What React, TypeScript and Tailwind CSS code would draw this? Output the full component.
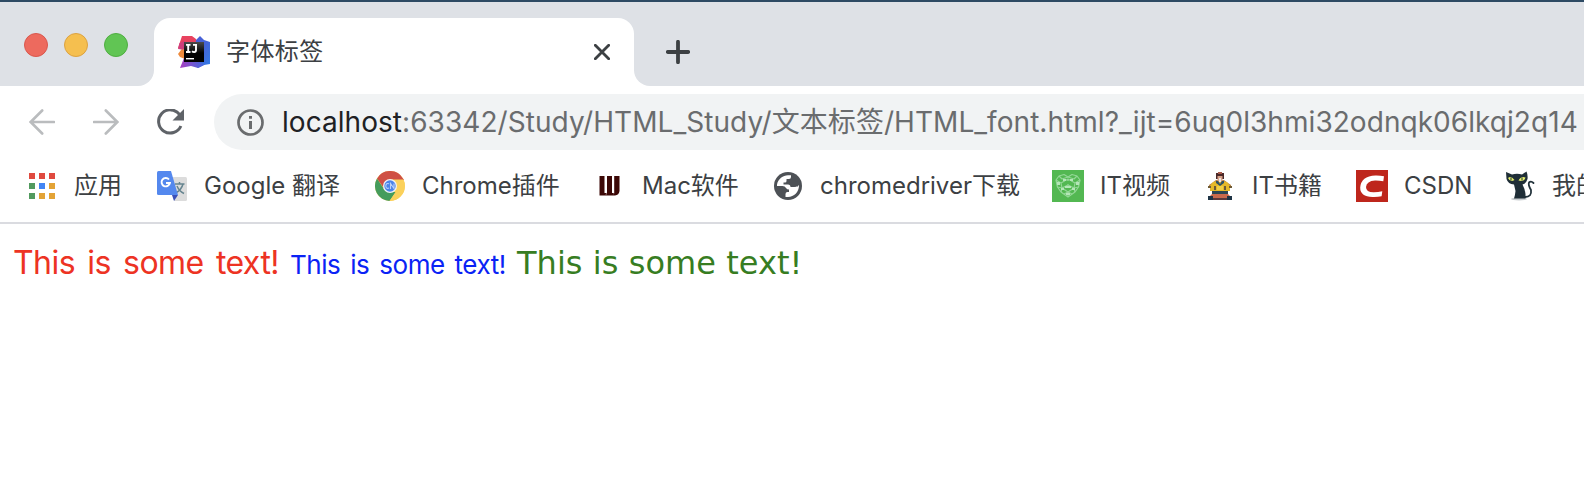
import type { ReactNode } from "react";

function IntelliJIcon() {
  return (
    <svg className="h-8 w-8 shrink-0" viewBox="0 0 32 32">
      <defs>
        <linearGradient id="ijBlue" x1="0" y1="0" x2="1" y2="1">
          <stop offset="0" stopColor="#4a5fd8" />
          <stop offset="0.5" stopColor="#4664d6" />
          <stop offset="1" stopColor="#2f7de8" />
        </linearGradient>
        <linearGradient id="ijPurple" x1="0" y1="0" x2="1" y2="0">
          <stop offset="0" stopColor="#a83fc0" />
          <stop offset="1" stopColor="#3f6ce0" />
        </linearGradient>
        <linearGradient id="ijBox" x1="0" y1="0" x2="0" y2="1">
          <stop offset="0" stopColor="#4a4a4a" />
          <stop offset="0.55" stopColor="#000" />
        </linearGradient>
      </defs>
      <path d="M4 0H14L18 3L19 8H6L5 14L0 12L2 6Z" fill="#e8425f" />
      <path d="M1.500 7L7 5V14L0 13Z" fill="#cf3f7c" />
      <path d="M3 14L7 13V23L2 21L0 18Z" fill="#ee8a3c" />
      <path d="M18 4L22 0L26 4L32 6V28L26 29L20 32L15 28Z" fill="url(#ijBlue)" />
      <path d="M6 22L18 25L27 28.500L20 32L13 30L2 32Z" fill="url(#ijPurple)" />
      <rect x="6" y="6" width="20" height="20" fill="url(#ijBox)" />
      <path d="M8 8.900H12.500M10.200 8.900V16M8 16H12.500M15 8.900H19M18 8.900V14Q18 16.100 16.200 16.100Q15 16.100 14 15.200" fill="none" stroke="#fff" strokeWidth="1.900" />
      <rect x="8" y="22" width="8" height="1.400" fill="#fff" />
    </svg>
  );
}

function AppsIcon() {
  return (
    <svg className="h-[26px] w-[26px] shrink-0" viewBox="0 0 26 26" shapeRendering="crispEdges">
      <path d="M0 0h6v6H0zM10 0h6v6h-6zM20 0h6v6h-6z" fill="#e04a3f" />
      <path d="M0 10h6v6H0zM0 20h6v6H0z" fill="#529a5f" />
      <path d="M10 10h6v6h-6z" fill="#4285f4" />
      <path d="M20 10h6v6h-6zM10 20h6v6h-6zM20 20h6v6h-6z" fill="#e3a336" />
    </svg>
  );
}

function TranslateIcon() {
  return (
    <svg className="h-[30px] w-[30px] shrink-0" viewBox="0 0 30 30">
      <path d="M14 6H28.500Q30 6 30 7.500V28.500Q30 30 28.500 30H17Z" fill="#dcdcdc" />
      <path d="M18 13H27.500M22.500 11V13M26 13Q24.500 19 18.500 22M20 15Q22 20 27 22.500" fill="none" stroke="#65848f" strokeWidth="1.500" />
      <path d="M15 24H21L17 30Z" fill="#3b50b8" />
      <path d="M1.500 0H14L21 24H1.500Q0 24 0 22.500V1.500Q0 0 1.500 0Z" fill="#5488ee" />
      <path d="M12 8.500A4.200 4.200 0 1 0 12.900 12H9" fill="none" stroke="#fff" strokeWidth="1.900" />
    </svg>
  );
}

function ChromeIcon() {
  return (
    <svg className="h-[30px] w-[30px] shrink-0" viewBox="0 0 30 30">
      <circle cx="15" cy="15" r="15" fill="#fbd15b" />
      <path d="M2 7.500A15 15 0 0 1 28 7.500L29 9H15L9.500 18Z" fill="#cf5044" />
      <path d="M2 7.500L9.300 18.500L15 21H21L14.500 30A15 15 0 0 1 2 7.500Z" fill="#459c5c" />
      <path d="M28 8.500H15V21H20.500L14.500 30A15 15 0 0 0 28.300 8.500Z" fill="#fbd15b" />
      <circle cx="15" cy="15" r="7" fill="#f1f3f5" />
      <circle cx="15" cy="15" r="5.700" fill="#4b84e8" />
      <path d="M14 12.800Q11 11.500 10.800 15Q11 18.300 14 17M15.500 18V12.500L19 17.500V12.500" fill="none" stroke="#b9d0f7" strokeWidth="1.100" />
    </svg>
  );
}

function MacIcon() {
  return (
    <svg className="h-5 w-[21px] shrink-0" viewBox="0 0 21 20">
      <path d="M0.500 0H5.500V17H8V0H13V17H15.200V0H20.500V15Q20 19 16 19.500H0.500Z" fill="#3c0806" />
      <path d="M6.200 18.500L8 16.500V18.500ZM13.700 18.500L15.200 16.500V18Z" fill="#9c7b79" />
    </svg>
  );
}

function GlobeIcon() {
  return (
    <svg className="h-7 w-7 shrink-0" viewBox="0 0 28 28">
      <circle cx="14" cy="14" r="14" fill="#4d5156" />
      <path d="M3 12.500C4 7 9 3.200 14 3.200H17V5Q17 7 15 7H12.500V9Q12.500 10.500 11 10.500H9.500V12.500H14Q16.500 12.500 16.500 15H20Q22 15 23 13.500L25 13.500C25 20 20 25 14 25H11.500V22Q11.500 20 13.500 20H15V17.500Q13 17.500 12 16Q11 14 8.500 14H3Z" fill="#fff" />
      <path d="M15.500 8.500L18 6.500L24 10.500V14.500H18L15.500 12Z" fill="#4d5156" />
    </svg>
  );
}

function VideoIcon() {
  return (
    <svg className="h-8 w-8 shrink-0" viewBox="0 0 32 32">
      <rect width="32" height="32" fill="#53b852" />
      <g fill="none" stroke="#93d796" strokeWidth="1.200" strokeLinejoin="round">
        <path d="M7 6L12 4.500L16 7L20 4.500L25 6L28 10L26.500 17L23 22L16 27L9 22L5.500 17L4 10Z" />
        <path d="M4 10L9 13L16 9L23 13L28 10M7 6L10 9L16 7L22 9L25 6M9 13L10 18L16 15L22 18L23 13M5.500 17L10 18L9 22M26.500 17L22 18L23 22M10 18L16 22L22 18M16 22V27M12 24L16 22L20 24M16 9V15" />
      </g>
      <path d="M11 9H14V11H11ZM18 9H21V11H18ZM5 12H8V15H5ZM24 12H27V15H24ZM13 16H19V18H13ZM9 18H12V20H9ZM20 18H23V20H20ZM14 23H18V25H14Z" fill="#b5e6b8" />
      <path d="M13 11H19V14H13Z" fill="#53b852" />
    </svg>
  );
}

function MonkIcon() {
  return (
    <svg className="h-7 w-6 shrink-0" viewBox="0 0 24 28">
      <path d="M4 11L8 8H16L20 11L23 13V15H1V13Z" fill="#b98445" />
      <path d="M8 1H16V7H8Z" fill="#4a2828" />
      <path d="M10 0H14V2H10Z" fill="#a85a4a" />
      <path d="M9.500 4H14.500V9H9.500Z" fill="#d9a38a" />
      <path d="M11 6H13V10H11Z" fill="#efe6e0" />
      <path d="M5 10L10 9L12 11L14 9L19 10L22 14V19H2V14Z" fill="#e6b928" />
      <path d="M8 9H10L12 12L14 9H16V11L12 14L8 11Z" fill="#2e5166" />
      <path d="M0 14H3V16H0ZM21 14H24V16H21ZM6 14H8V18H6ZM16 14H18V18H16Z" fill="#6d5a35" />
      <path d="M9 14H15V18H9Z" fill="#f2cf43" />
      <path d="M4 19H20V22H4Z" fill="#2d4654" />
      <path d="M4 22H20L22 24V26H2V24Z" fill="#c9694c" />
      <path d="M0 24H5V28H0ZM19 24H24V28H19Z" fill="#1e3345" />
      <path d="M5 26H19V28H5Z" fill="#5a3a3c" />
    </svg>
  );
}

function CsdnIcon() {
  return (
    <svg className="h-8 w-8 shrink-0" viewBox="0 0 32 32">
      <rect width="32" height="32" fill="#be261c" />
      <path d="M28 6.200L27.300 11.200Q23 10.400 19 10.500Q10.600 11 10 17Q10 22.500 18 22.300Q22 22.300 26.300 21.300L25.600 26.200Q21.500 27.200 16.500 27Q4 26.500 4.200 17.500Q5 6 19.500 5.400Q24 5.300 28 6.200Z" fill="#fff" />
    </svg>
  );
}

function CatIcon() {
  return (
    <svg className="h-[30px] w-[30px] shrink-0" viewBox="0 0 30 30">
      <ellipse cx="14" cy="28" rx="8" ry="1.500" fill="#c9cdd0" />
      <path d="M20 26Q27 26 26 19Q23 14 24 11.500Q26 9.500 28.500 12" fill="none" stroke="#22323b" strokeWidth="1.800" strokeLinecap="round" />
      <path d="M1 1L7 3.500Q12 2 17 3.500L21.500 0.500Q23 4 22.500 8Q21 13 17.500 13.500Q20 18 20.500 23V27.500H9Q10 25 10.500 20L9 13.500Q3 13 1.500 8Z" fill="#1f2e37" />
      <path d="M3 7Q6 4.500 9.500 9Q5 11.500 3 7ZM13.500 9.500Q16 4.500 20.500 6.500Q19.500 11 13.500 9.500Z" fill="#e4ee6c" />
      <path d="M6 6.500V9.500M17 6.500V9.500" stroke="#1f2e37" strokeWidth="1" />
    </svg>
  );
}

function Bookmark({ icon, children, className }: { icon: ReactNode; children: ReactNode; className: string }) {
  return (
    <div className={`flex shrink-0 items-center whitespace-nowrap ${className}`}>
      {icon}
      <span>{children}</span>
    </div>
  );
}

function TabStrip() {
  return (
    <div className="flex h-[86px] border-t-2 border-[#2d4a63] bg-[#dee1e6]">
      <div className="flex w-[154px] gap-4 rounded-br-2xl bg-[#dee1e6] pt-[31px] pl-6">
        <div className="h-6 w-6 rounded-full border border-[#d9574d] bg-[#ed6a5e]" />
        <div className="h-6 w-6 rounded-full border border-[#dca241] bg-[#f5bf4f]" />
        <div className="h-6 w-6 rounded-full border border-[#4fae41] bg-[#61c554]" />
      </div>
      <div className="flex flex-1 bg-linear-to-b from-[#dee1e6] from-50% to-white to-50%">
        <div className="-ml-4 flex w-4 shrink-0 flex-col justify-end">
          <svg className="h-4 w-4" viewBox="0 0 16 16">
            <rect width="16" height="16" fill="#fff" />
            <path d="M0 0H16A16 16 0 0 1 0 16Z" fill="#dee1e6" />
          </svg>
        </div>
        <div className="flex w-[480px] shrink-0 flex-col bg-[#dee1e6] pt-4">
          <div className="flex flex-1 items-center rounded-t-2xl bg-white pl-6">
            <IntelliJIcon />
            <span className="ml-4 flex-1 text-2xl leading-8 tracking-[0.4px] text-[#3c4043]">字体标签</span>
            <svg className="mr-6 h-4 w-4" viewBox="0 0 16 16">
              <path d="M1.300 1.300L14.700 14.700M14.700 1.300L1.300 14.700" stroke="#3c4043" strokeWidth="2.800" strokeLinecap="round" />
            </svg>
          </div>
        </div>
        <div className="flex flex-1 rounded-bl-2xl bg-[#dee1e6] pt-[38px] pl-8">
          <svg className="h-6 w-6" viewBox="0 0 24 24">
            <path d="M12 1.800V22.200M1.800 12H22.200" stroke="#3c4043" strokeWidth="3.800" strokeLinecap="round" />
          </svg>
        </div>
      </div>
    </div>
  );
}

function Toolbar() {
  return (
    <div className="flex h-16 pt-2">
      <div className="flex h-14 w-[214px] shrink-0 items-center pl-[29px]">
        <svg className="h-[26px] w-[26px]" viewBox="0 0 26 26">
          <path d="M25 13H2M13.200 1.500L1.700 13L13.200 24.500" fill="none" stroke="#babcbe" strokeWidth="2.600" strokeLinecap="round" />
        </svg>
        <svg className="ml-[38px] h-[26px] w-[26px]" viewBox="0 0 26 26">
          <path d="M1 13H24M12.800 1.500L24.300 13L12.800 24.500" fill="none" stroke="#babcbe" strokeWidth="2.600" strokeLinecap="round" />
        </svg>
        <svg className="ml-[38px] h-[27px] w-[27px]" viewBox="0 0 27 27">
          <path d="M22.500 5.500A11.600 11.600 0 1 0 23.900 17" fill="none" stroke="#5f6368" strokeWidth="3" />
          <path d="M27 0V11.500H15.500Z" fill="#5f6368" />
        </svg>
      </div>
      <div className="flex h-14 flex-1 items-center overflow-hidden rounded-l-full bg-[#f1f3f4] pl-[23px]">
        <svg className="h-[27px] w-[27px] shrink-0" viewBox="0 0 27 27">
          <circle cx="13.500" cy="13.500" r="12" fill="none" stroke="#6a6c6e" strokeWidth="2.700" />
          <path d="M12 7H15V9.700H12ZM12 12H15V20H12Z" fill="#6a6c6e" />
        </svg>
        <div className="ml-[18px] text-[28px] leading-9 tracking-[0.05px] whitespace-nowrap text-[#6a6c6e]">
          <span className="text-[#202124]">localhost</span>:63342/Study/HTML_Study/文本标签/HTML_font.html?_ijt=6uq0l3hmi32odnqk06lkqj2q14
        </div>
      </div>
    </div>
  );
}

function BookmarkBar() {
  return (
    <div className="flex h-[74px] items-center overflow-hidden border-b-2 border-[#dadbe0] pl-[29px] text-2xl leading-8 text-[#3c4043]">
      <Bookmark className="w-32 gap-[19px]" icon={<AppsIcon />}>应用</Bookmark>
      <Bookmark className="w-[218px] gap-[17px]" icon={<TranslateIcon />}>Google 翻译</Bookmark>
      <Bookmark className="w-[224px] gap-[17px]" icon={<ChromeIcon />}>Chrome插件</Bookmark>
      <Bookmark className="w-[175px] gap-[22px]" icon={<MacIcon />}>Mac软件</Bookmark>
      <Bookmark className="w-[278px] gap-[18px]" icon={<GlobeIcon />}>chromedriver下载</Bookmark>
      <Bookmark className="w-[156px] gap-4" icon={<VideoIcon />}>IT视频</Bookmark>
      <Bookmark className="w-[148px] gap-5" icon={<MonkIcon />}>IT书籍</Bookmark>
      <Bookmark className="w-[149px] gap-4" icon={<CsdnIcon />}>CSDN</Bookmark>
      <Bookmark className="w-[149px] gap-[17px]" icon={<CatIcon />}>我的</Bookmark>
    </div>
  );
}

export default function App() {
  return (
    <div className="h-[496px] w-[1584px] overflow-hidden bg-white font-['Inter','Noto_Sans_CJK_SC',sans-serif]">
      <TabStrip />
      <Toolbar />
      <BookmarkBar />
      <main className="flex items-baseline pt-[19px] pl-[13px] leading-10 whitespace-nowrap">
        <span className="w-[277px] text-[32px] tracking-[-0.55px] text-[#ed3323] [word-spacing:3.8px]">This is some text!</span>
        <span className="w-[227px] text-[26px] tracking-[-0.45px] text-[#0a23f5] [word-spacing:3px]">This is some text!</span>
        <span className="font-['DejaVu_Sans'] text-[32px] tracking-[0.05px] text-[#377d22]">This is some text!</span>
      </main>
    </div>
  );
}
